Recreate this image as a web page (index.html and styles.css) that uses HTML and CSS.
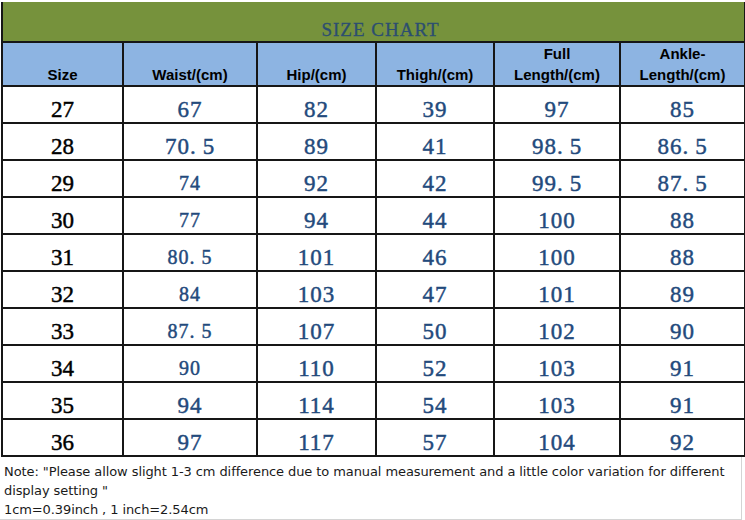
FILE: index.html
```html
<!DOCTYPE html>
<html lang="en">
<head>
<meta charset="utf-8">
<title>Size Chart</title>
<link rel="stylesheet" href="styles.css">
</head>
<body>
<div class="sheet">
  <table class="chart">
    <colgroup>
      <col class="c1"><col class="c2"><col class="c3"><col class="c4"><col class="c5"><col class="c6">
    </colgroup>
    <thead>
      <tr class="title-row"><th colspan="6"><span class="title">SIZE CHART</span></th></tr>
      <tr class="head-row">
        <th>Size</th>
        <th>Waist/(cm)</th>
        <th>Hip/(cm)</th>
        <th>Thigh/(cm)</th>
        <th>Full<br>Length/(cm)</th>
        <th>Ankle-<br>Length/(cm)</th>
      </tr>
    </thead>
    <tbody>
      <tr><td class="size">27</td><td>67</td><td>82</td><td>39</td><td>97</td><td>85</td></tr>
      <tr><td class="size">28</td><td>70<span class="pt">.</span>5</td><td>89</td><td>41</td><td>98<span class="pt">.</span>5</td><td>86<span class="pt">.</span>5</td></tr>
      <tr><td class="size">29</td><td class="sm">74</td><td>92</td><td>42</td><td>99<span class="pt">.</span>5</td><td>87<span class="pt">.</span>5</td></tr>
      <tr><td class="size">30</td><td class="sm">77</td><td>94</td><td>44</td><td>100</td><td>88</td></tr>
      <tr><td class="size">31</td><td class="sm">80<span class="pt">.</span>5</td><td>101</td><td>46</td><td>100</td><td>88</td></tr>
      <tr><td class="size">32</td><td class="sm">84</td><td>103</td><td>47</td><td>101</td><td>89</td></tr>
      <tr><td class="size">33</td><td class="sm">87<span class="pt">.</span>5</td><td>107</td><td>50</td><td>102</td><td>90</td></tr>
      <tr><td class="size">34</td><td class="sm">90</td><td>110</td><td>52</td><td>103</td><td>91</td></tr>
      <tr><td class="size">35</td><td>94</td><td>114</td><td>54</td><td>103</td><td>91</td></tr>
      <tr><td class="size">36</td><td>97</td><td>117</td><td>57</td><td>104</td><td>92</td></tr>
    </tbody>
  </table>
  <div class="note">
    <p class="note-line">Note: "Please allow slight 1-3 cm difference due to manual measurement and a little color variation for different</p>
    <p class="note-line">display setting "</p>
    <p class="note-line">1cm=0.39inch , 1 inch=2.54cm</p>
  </div>
</div>
</body>
</html>
```

FILE: styles.css
```css
html, body {
  margin: 0;
  padding: 0;
  background: #ffffff;
}

.sheet {
  width: 745px;
  height: 520px;
  padding-top: 2px;
  box-sizing: border-box;
  overflow: hidden;
}

.chart {
  border-collapse: collapse;
  table-layout: fixed;
  width: 743px;
  margin-left: 1px;
}

.c1 { width: 121px; }
.c2 { width: 134px; }
.c3 { width: 119px; }
.c4 { width: 118px; }
.c5 { width: 126px; }
.c6 { width: 125px; }

.chart th,
.chart td {
  border: 2px solid #161616;
  padding: 0;
  text-align: center;
  vertical-align: bottom;
}

.title-row th {
  height: 39px;
  background: #76923c;
  border-top: none;
  padding-left: 14px;
}

.title {
  font-family: "Liberation Serif", "Times New Roman", serif;
  font-weight: normal;
  font-size: 19px;
  letter-spacing: 1px;
  color: #2c4e70;
  line-height: 22px;
  display: inline-block;
  -webkit-text-stroke: 0.3px #2c4e70;
}

.head-row th {
  height: 40px;
  background: #8db4e2;
  font-family: "Liberation Sans", Arial, sans-serif;
  font-weight: bold;
  font-size: 15px;
  line-height: 21px;
  color: #000;
}

.chart tbody td {
  height: 35px;
  font-family: "Liberation Serif", "Times New Roman", serif;
  font-size: 23px;
  line-height: 25px;
  color: #234a7c;
  letter-spacing: 1px;
  -webkit-text-stroke: 0.45px #234a7c;
}

.chart tbody td.size {
  color: #000;
  letter-spacing: 0;
  -webkit-text-stroke: 0.45px #000;
}

.chart tbody td.sm {
  font-size: 20px;
}

.pt {
  margin-right: 6px;
}

.note {
  height: 63px;
  border-right: 1px solid #d4d4d4;
  border-bottom: 1px solid #d4d4d4;
  width: 742px;
  box-sizing: border-box;
  padding: 5px 0 0 4px;
}

.note-line {
  margin: 0;
  font-family: "DejaVu Sans", Tahoma, sans-serif;
  font-size: 13px;
  letter-spacing: -0.09px;
  line-height: 19px;
  color: #1a1a1a;
  white-space: nowrap;
}
```
